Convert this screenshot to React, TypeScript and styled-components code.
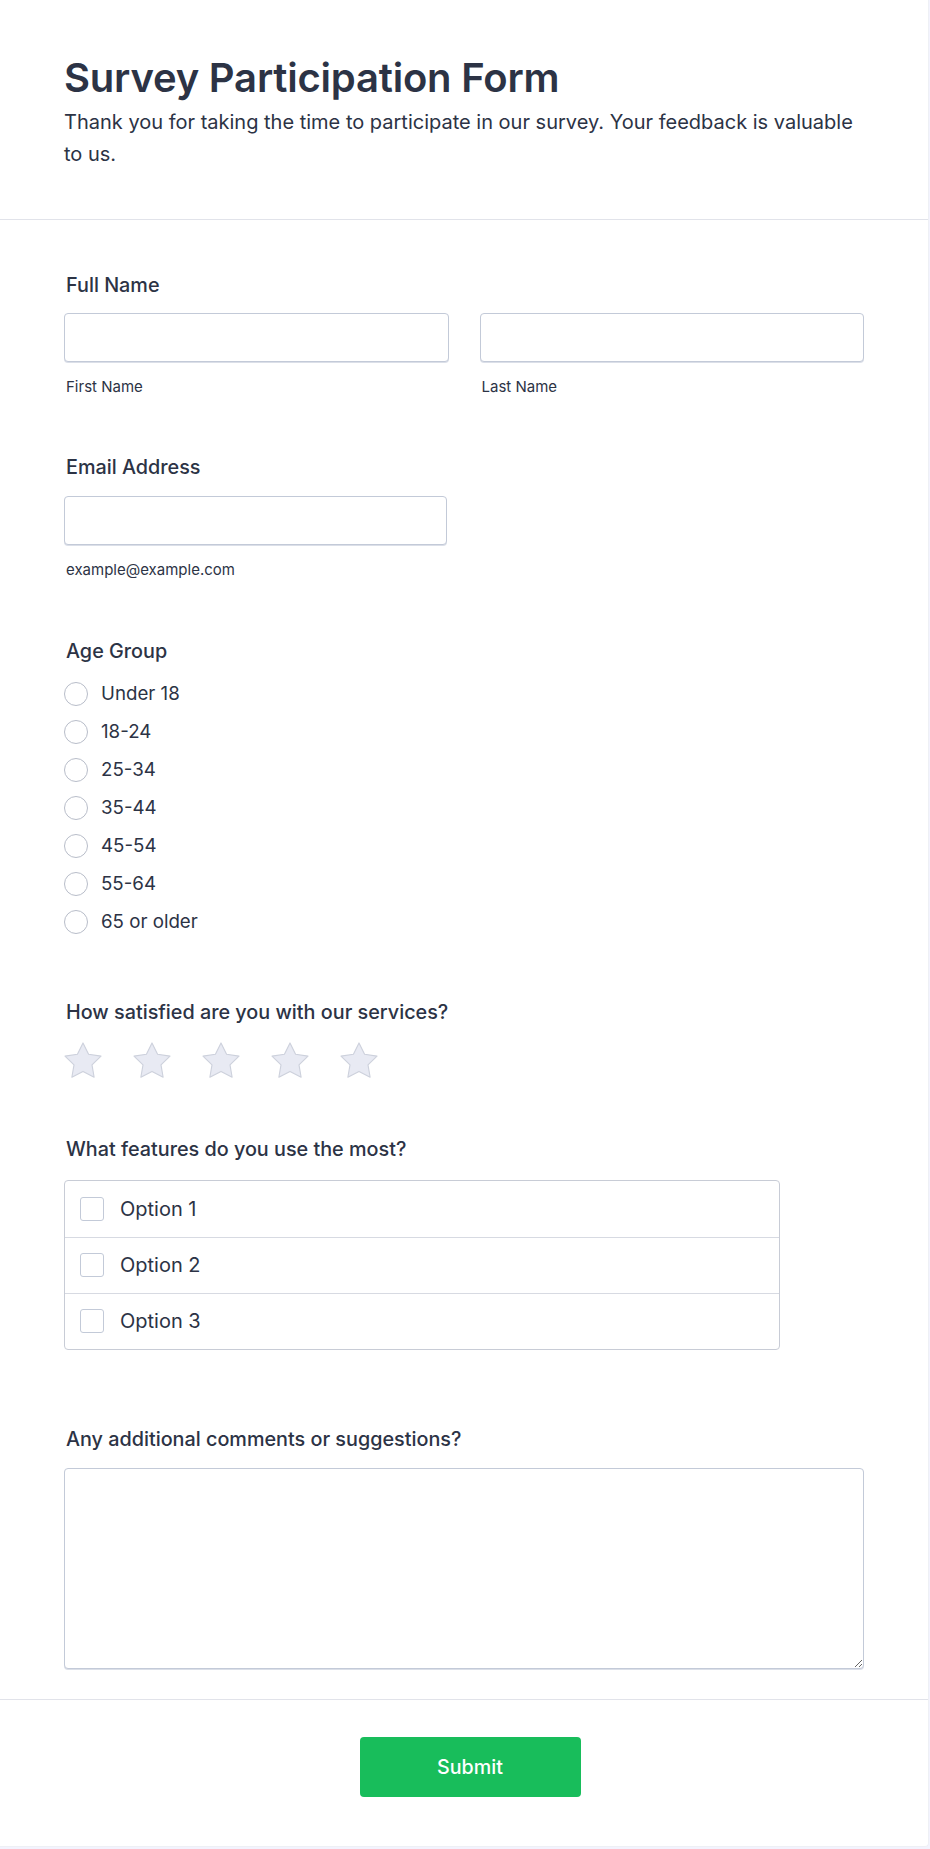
import React from "react";
import styled, { createGlobalStyle } from "styled-components";

const Global = createGlobalStyle`
  html, body { margin: 0; padding: 0; background: #f3f3fe; }
  body { font-family: Inter, "Noto Sans", Arial, sans-serif; color: #2c3345; }
  * { box-sizing: border-box; }
`;

const Card = styled.div`
  width: 929px;
  background: #ffffff;
  border-right: 1px solid #eef0f5;
  border-bottom: 1px solid #eef0f5;
  border-bottom-right-radius: 4px;
  margin-bottom: 3px;
`;

const Header = styled.header`
  padding: 54px 64px 49px 64px;
  border-bottom: 1px solid #e1e3ea;
`;

const Title = styled.h1`
  margin: 0 0 4px 0;
  font-size: 40px;
  line-height: 48px;
  font-weight: 600;
  color: #2c3345;
  letter-spacing: -0.2px;
`;

const Subtitle = styled.p`
  margin: 0;
  font-size: 20px;
  line-height: 32px;
  font-weight: 400;
  color: #2c3345;
`;

const Body = styled.div`
  padding: 52px 64px 30px 64px;
  display: flex;
  flex-direction: column;
`;

const Field = styled.section<{ $gap?: number }>`
  display: flex;
  flex-direction: column;
  margin-bottom: ${(p) => p.$gap ?? 57}px;
  &:last-child { margin-bottom: 0; }
`;

const Label = styled.label<{ $space?: number }>`
  display: block;
  font-size: 19.8px;
  line-height: 26.6px;
  font-weight: 500;
  color: #2c3345;
  padding-left: 2px;
  margin-bottom: ${(p) => p.$space ?? 15}px;
`;

const NameRow = styled.div`
  display: grid;
  grid-template-columns: 1fr 1fr;
  column-gap: 31px;
`;

const InputWrap = styled.div<{ $width?: number }>`
  display: flex;
  flex-direction: column;
  gap: 14px;
  width: ${(p) => (p.$width ? `${p.$width}px` : "auto")};
`;

const TextInput = styled.input`
  width: 100%;
  height: 49px;
  border: 1px solid #c3cad8;
  border-radius: 4px;
  box-shadow: 0 1px 0 rgba(195, 202, 216, 0.6);
  background: #fff;
  font-family: inherit;
  font-size: 18px;
  padding: 0 12px;
  color: #2c3345;
  outline: none;
`;

const SubLabel = styled.span`
  font-size: 15px;
  line-height: 21px;
  color: #2c3345;
  padding-left: 2px;
`;

const RadioList = styled.div`
  display: flex;
  flex-direction: column;
  margin-top: -5px;
`;

const RadioRow = styled.label`
  display: flex;
  align-items: center;
  height: 38px;
  gap: 13px;
  font-size: 18.7px;
  color: #2c3345;
`;

const RadioCircle = styled.span`
  width: 24px;
  height: 24px;
  border-radius: 50%;
  border: 1px solid #b8bdc9;
  background: #fff;
  flex: none;
`;

const Stars = styled.div`
  display: flex;
  gap: 31px;
  margin-top: 2px;
`;

const StarBox = styled.span`
  width: 38px;
  height: 36px;
  display: flex;
  align-items: center;
  justify-content: center;
`;

const CheckGroup = styled.div`
  width: 716px;
  border: 1px solid #c8ccd6;
  border-radius: 4px;
  display: flex;
  flex-direction: column;
  margin-top: 2px;
`;

const CheckRow = styled.label`
  display: flex;
  align-items: center;
  height: 56px;
  padding-left: 15px;
  gap: 16px;
  font-size: 20px;
  color: #2c3345;
  & + & { border-top: 1px solid #d7dae2; }
`;

const CheckBox = styled.span`
  width: 24px;
  height: 24px;
  border: 1px solid #c3cad8;
  border-radius: 3px;
  background: #fff;
  flex: none;
`;

const TextArea = styled.textarea`
  width: 100%;
  height: 201px;
  border: 1px solid #c3cad8;
  border-radius: 4px;
  box-shadow: 0 1px 0 rgba(195, 202, 216, 0.6);
  font-family: inherit;
  font-size: 18px;
  padding: 10px 12px;
  resize: vertical;
  outline: none;
  display: block;
`;

const Footer = styled.footer`
  border-top: 1px solid #e1e3ea;
  padding: 37px 0 49px 12px;
  display: flex;
  justify-content: center;
`;

const SubmitButton = styled.button`
  width: 221px;
  height: 60px;
  background: #18bd5b;
  border: none;
  border-radius: 4px;
  color: #fff;
  font-family: inherit;
  font-size: 19.7px;
  font-weight: 500;
  cursor: pointer;
`;

const Star = () => (
  <svg width="38" height="36" viewBox="1.8 1.8 20.4 19.4">
    <polygon
      points="12,2.3 15.0,8.4 21.7,9.4 16.85,14.1 18.0,20.8 12,17.65 6.0,20.8 7.15,14.1 2.3,9.4 9.0,8.4"
      fill="#e8eaf3"
      stroke="#cdd1dc"
      strokeWidth="0.6"
      strokeLinejoin="round"
    />
  </svg>
);

const ages = ["Under 18", "18-24", "25-34", "35-44", "45-54", "55-64", "65 or older"];
const options = ["Option 1", "Option 2", "Option 3"];

export default function App() {
  return (
    <>
      <Global />
      <Card>
        <Header>
          <Title>Survey Participation Form</Title>
          <Subtitle>
            Thank you for taking the time to participate in our survey. Your feedback is valuable to us.
          </Subtitle>
        </Header>
        <Body>
          <Field $gap={57}>
            <Label $space={14}>Full Name</Label>
            <NameRow>
              <InputWrap>
                <TextInput type="text" />
                <SubLabel>First Name</SubLabel>
              </InputWrap>
              <InputWrap>
                <TextInput type="text" />
                <SubLabel>Last Name</SubLabel>
              </InputWrap>
            </NameRow>
          </Field>
          <Field $gap={58}>
            <Label $space={16}>Email Address</Label>
            <InputWrap $width={383}>
              <TextInput type="email" />
              <SubLabel>example@example.com</SubLabel>
            </InputWrap>
          </Field>
          <Field $gap={58}>
            <Label $space={15}>Age Group</Label>
            <RadioList>
              {ages.map((a) => (
                <RadioRow key={a}>
                  <RadioCircle />
                  {a}
                </RadioRow>
              ))}
            </RadioList>
          </Field>
          <Field $gap={58}>
            <Label $space={15}>How satisfied are you with our services?</Label>
            <Stars>
              {[0, 1, 2, 3, 4].map((i) => (
                <StarBox key={i}>
                  <Star />
                </StarBox>
              ))}
            </Stars>
          </Field>
          <Field $gap={76}>
            <Label $space={15}>What features do you use the most?</Label>
            <CheckGroup>
              {options.map((o) => (
                <CheckRow key={o}>
                  <CheckBox />
                  {o}
                </CheckRow>
              ))}
            </CheckGroup>
          </Field>
          <Field>
            <Label $space={15}>Any additional comments or suggestions?</Label>
            <TextArea />
          </Field>
        </Body>
        <Footer>
          <SubmitButton type="button">Submit</SubmitButton>
        </Footer>
      </Card>
    </>
  );
}
